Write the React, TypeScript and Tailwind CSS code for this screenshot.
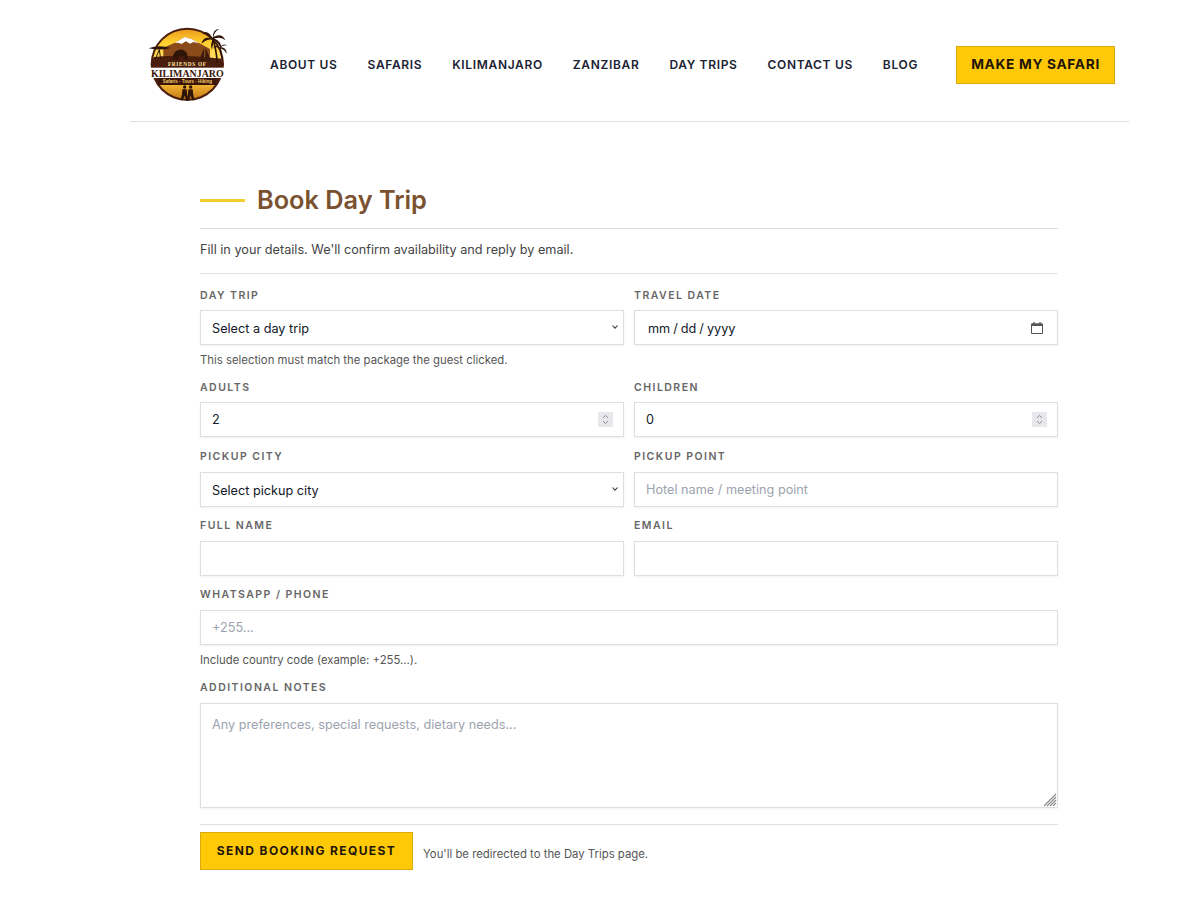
const navItems = ["ABOUT US", "SAFARIS", "KILIMANJARO", "ZANZIBAR", "DAY TRIPS", "CONTACT US", "BLOG"]

const fieldClass =
  "block w-full h-[35px] bg-white border border-[#dcdee3] shadow-[0_1px_2px_rgba(0,0,0,0.06)] rounded-none px-[11px] text-[12.7px] text-[#111827] outline-none placeholder:text-[#9ca3af]"

function Logo() {
  return (
    <svg viewBox="48 48 252 240" className="w-[84px] h-[80px] shrink-0">
      <defs>
        <linearGradient id="sky" x1="0" y1="0" x2="0" y2="1">
          <stop offset="0" stopColor="#e8951a" />
          <stop offset="0.45" stopColor="#ffd02e" />
          <stop offset="1" stopColor="#ffdf6a" />
        </linearGradient>
        <linearGradient id="low" x1="0" y1="0" x2="0" y2="1">
          <stop offset="0" stopColor="#f2b632" />
          <stop offset="1" stopColor="#b8660f" />
        </linearGradient>
        <clipPath id="disc">
          <circle cx="172" cy="166" r="104" />
        </clipPath>
      </defs>
      <circle cx="172" cy="166" r="110" fill="#4a1e0c" />
      <g clipPath="url(#disc)">
        <rect x="60" y="56" width="224" height="100" fill="url(#sky)" />
        <path d="M100 116 L138 100 L164 84 L184 90 L214 106 L240 120 L240 150 L100 150 Z" fill="#8a4a1a" />
        <path d="M134 102 L164 84 L184 90 L208 103 L190 99 L180 104 L168 97 L154 105 L146 101 Z" fill="#fff" />
        <path d="M60 146 Q130 132 284 150 L284 176 L60 176 Z" fill="#4a1e0c" />
        <rect x="60" y="226" width="224" height="60" fill="url(#low)" />
      </g>
      <path d="M128 150 Q128 126 148 122 Q166 120 172 136 L172 152 L164 152 L163 142 L146 142 L145 152 L136 152 L135 142 Q132 146 132 152 Z" fill="#2f1408" />
      <path d="M56 118 Q84 106 122 116 Q96 126 56 118 Z" fill="#2f1408" />
      <path d="M88 122 L92 150 M88 122 L76 150" stroke="#2f1408" strokeWidth="3" fill="none" />
      <path d="M222 118 L222 148 L210 148 Z M226 116 L240 148 L226 148 Z" fill="#3a1a0a" />
      <path d="M205 150 H244 L238 156 H212 Z" fill="#3a1a0a" />
      <path d="M262 160 Q258 116 248 90" stroke="#2f1408" strokeWidth="5" fill="none" />
      <path d="M248 88 Q232 60 216 74 Q234 72 246 90 Q222 78 214 104 Q232 88 248 92 Q240 106 246 122 Q250 104 250 92 Q266 102 274 122 Q276 98 252 88 Q276 82 286 94 Q276 70 250 84 Q254 66 268 60 Q248 60 248 88 Z" fill="#2f1408" />
      <path d="M276 154 Q274 130 270 118" stroke="#2f1408" strokeWidth="3.5" fill="none" />
      <path d="M270 116 Q258 104 250 116 Q262 112 270 118 Q268 130 274 138 Q274 126 272 118 Q284 122 290 134 Q290 116 272 114 Q282 106 292 110 Q278 100 270 116 Z" fill="#2f1408" />
      <text x="172" y="171" textAnchor="middle" fontFamily="'Liberation Serif', serif" fontWeight="700" fontSize="16" letterSpacing="2" fill="#fbe3a4">
        FRIENDS OF
      </text>
      <rect x="85" y="208" width="174" height="20" fill="#3a1608" />
      <rect x="60" y="176" width="224" height="31" fill="#ffffff" />
      <text transform="translate(172 204) scale(1 1.15)" x="0" y="0" textAnchor="middle" fontFamily="'Liberation Serif', serif" fontWeight="700" fontSize="29" textLength="218" lengthAdjust="spacingAndGlyphs" fill="#3a1608">
        KILIMANJARO
      </text>
      <text x="172" y="223" textAnchor="middle" fontFamily="'Liberation Sans', sans-serif" fontWeight="700" fontSize="14" textLength="148" lengthAdjust="spacingAndGlyphs" fill="#f6cf6a">
        Safaris · Tours · Hiking
      </text>
      <g fill="#2f1408">
        <circle cx="164" cy="234" r="5" />
        <path d="M157 241 H170 L172 258 L176 274 H169 L164 260 L158 274 H151 L156 256 Z" />
        <circle cx="182" cy="234" r="5" />
        <path d="M175 241 H188 L190 258 L194 274 H187 L182 260 L177 274 H171 L174 256 Z" />
      </g>
    </svg>
  )
}

function Header() {
  return (
    <header className="ml-[130px] w-[999px] h-[122px] border-b border-[#dddddd] flex items-center pt-[8px] pl-[16px]">
      <Logo />
      <nav className="flex items-center gap-[30px] ml-[40px]">
        {navItems.map((item) => (
          <a key={item} className="text-[12px] leading-[16px] font-semibold tracking-[0.055em] text-[#1a2233] whitespace-nowrap">
            {item}
          </a>
        ))}
      </nav>
      <button className="ml-[38px] w-[159px] h-[38px] bg-[#ffc907] border border-[#d9ab10] text-[13.7px] font-bold tracking-[0.05em] text-[#1f1408] whitespace-nowrap">
        MAKE MY SAFARI
      </button>
    </header>
  )
}

function Label({ children }: { children: string }) {
  return (
    <label className="block h-[16px] mb-[6.6px] text-[10.5px] leading-[16px] font-semibold tracking-[0.14em] text-[#666666]">
      {children}
    </label>
  )
}

function Help({ children }: { children: string }) {
  return <p className="h-[16.1px] mt-[7px] text-[11.35px] leading-[16px] text-[#555555]">{children}</p>
}

function SelectField({ label, value }: { label: string; value: string }) {
  return (
    <div className="relative">
      <select className={`${fieldClass} appearance-none pt-[2px]`}>
        <option>{value}</option>
      </select>
      <svg viewBox="0 0 8 6" aria-label={label} className="absolute right-[5px] top-[14px] w-[8px] h-[6px] pointer-events-none">
        <path d="M1.5 1.5 L4 4.2 L6.5 1.5" fill="none" stroke="#333333" strokeWidth="1.1" />
      </svg>
    </div>
  )
}

function NumberField({ value }: { value: number }) {
  return (
    <div className="relative">
      <input
        type="number"
        defaultValue={value}
        className={`${fieldClass} [&::-webkit-inner-spin-button]:appearance-none`}
      />
      <span className="absolute right-[11px] top-[10px] w-[15px] h-[15px] bg-[#e8e8ec] flex items-center justify-center pointer-events-none">
        <svg viewBox="0 0 9 13" className="w-[9px] h-[13px]">
          <path d="M2 4.8 L4.5 2.4 L7 4.8 M2 8.2 L4.5 10.6 L7 8.2" fill="none" stroke="#8a8a90" strokeWidth="1" />
        </svg>
      </span>
    </div>
  )
}

function DateField() {
  return (
    <div className="relative">
      <input
        type="date"
        className={`${fieldClass} pl-[12px] pt-[2px] [&::-webkit-datetime-edit-text]:px-[2px] [&::-webkit-calendar-picker-indicator]:opacity-0`}
      />
      <svg viewBox="0 0 14 14" className="absolute right-[14px] top-[11px] w-[14px] h-[14px] pointer-events-none">
        <path d="M1.5 3 H12.5 V12.5 H1.5 Z" fill="none" stroke="#555555" strokeWidth="1" />
        <path d="M1.5 2.5 H12.5 V5 H1.5 Z" fill="#555555" />
        <path d="M4 1 V3 M10 1 V3" stroke="#555555" strokeWidth="1.2" />
      </svg>
    </div>
  )
}

export default function App() {
  return (
    <div className="min-h-[900px] bg-white font-['Inter',sans-serif]">
      <Header />
      <main className="ml-[200px] w-[858px]">
        <div className="flex items-center gap-[12px] h-[107px] pt-[50px] border-b border-[#dcdcdc]">
          <span className="w-[45px] h-[3px] bg-[#f2cd2e]" />
          <h1 className="text-[25.3px] leading-[36px] font-semibold text-[#7a5230]">Book Day Trip</h1>
        </div>
        <p className="h-[45px] border-b border-[#e4e4e4] text-[12.7px] leading-[42px] text-[#444444]">
          Fill in your details. We'll confirm availability and reply by email.
        </p>
        <div className="grid grid-cols-2 gap-x-[10px] gap-y-[11.6px] pt-[13.5px]">
          <div>
            <Label>DAY TRIP</Label>
            <SelectField label="Day trip" value="Select a day trip" />
            <Help>This selection must match the package the guest clicked.</Help>
          </div>
          <div>
            <Label>TRAVEL DATE</Label>
            <DateField />
          </div>
          <div>
            <Label>ADULTS</Label>
            <NumberField value={2} />
          </div>
          <div>
            <Label>CHILDREN</Label>
            <NumberField value={0} />
          </div>
          <div>
            <Label>PICKUP CITY</Label>
            <SelectField label="Pickup city" value="Select pickup city" />
          </div>
          <div>
            <Label>PICKUP POINT</Label>
            <input type="text" placeholder="Hotel name / meeting point" className={fieldClass} />
          </div>
          <div>
            <Label>FULL NAME</Label>
            <input type="text" className={fieldClass} />
          </div>
          <div>
            <Label>EMAIL</Label>
            <input type="email" className={fieldClass} />
          </div>
          <div className="col-span-2 pb-[0.8px]">
            <Label>WHATSAPP / PHONE</Label>
            <input type="tel" placeholder="+255..." className={fieldClass} />
            <Help>Include country code (example: +255...).</Help>
          </div>
          <div className="col-span-2">
            <Label>ADDITIONAL NOTES</Label>
            <div className="relative">
              <textarea
                placeholder="Any preferences, special requests, dietary needs..."
                className="block w-full h-[105px] resize-none bg-white border border-[#dcdee3] shadow-[0_1px_2px_rgba(0,0,0,0.06)] px-[11px] py-[12px] text-[12.7px] leading-[18px] text-[#111827] outline-none placeholder:text-[#9ca3af]"
              />
              <svg viewBox="0 0 14 14" className="absolute right-[1px] bottom-[1px] w-[14px] h-[14px] pointer-events-none">
                <path d="M1 13 L13 1 M4 13 L13 4 M7 13 L13 7 M10 13 L13 10" stroke="#8a8a8a" strokeWidth="1.1" fill="none" />
              </svg>
            </div>
          </div>
        </div>
        <div className="mt-[16px] border-t border-[#e0e1e8] pt-[7px] flex items-center gap-[10px]">
          <button className="w-[213px] h-[38px] bg-[#ffc907] border border-[#d9ab10] text-[12px] font-bold tracking-[0.115em] text-[#1f1408] whitespace-nowrap">
            SEND BOOKING REQUEST
          </button>
          <span className="pt-[6px] text-[11.35px] text-[#555555]">You'll be redirected to the Day Trips page.</span>
        </div>
      </main>
    </div>
  )
}
